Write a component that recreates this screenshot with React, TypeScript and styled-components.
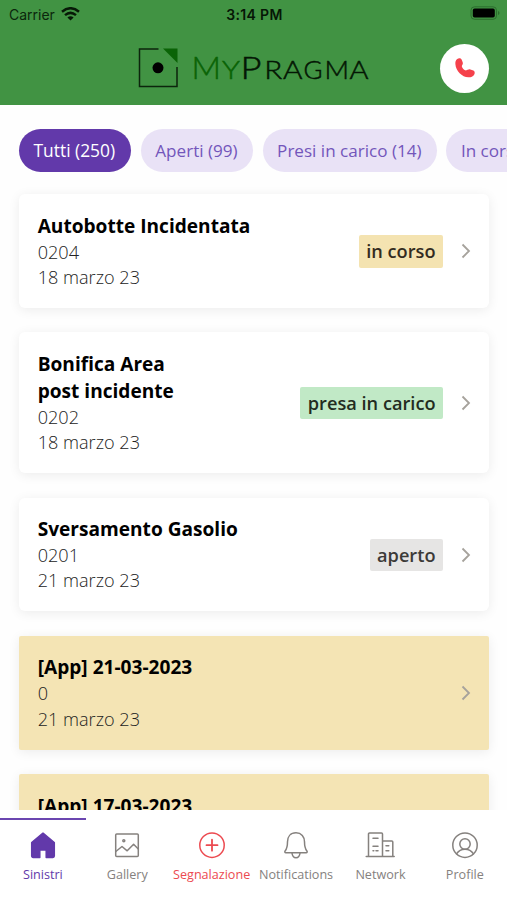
import React from "react";
import styled, { createGlobalStyle } from "styled-components";

const GlobalStyle = createGlobalStyle`
  *, *::before, *::after { box-sizing: border-box; }
  body { margin: 0; background: #fefefe; font-family: "Open Sans", sans-serif; }
`;

const Screen = styled.div`
  width: 507px;
  height: 900px;
  display: flex;
  flex-direction: column;
  overflow: hidden;
  background: #fefefe;
`;

const Header = styled.header`
  flex: 0 0 104.5px;
  background: #419343;
`;

const StatusBar = styled.div`
  height: 28px;
  display: grid;
  grid-template-columns: 1fr 1fr 1fr;
  align-items: center;
  padding: 0 7px 0 9px;
  font-family: Inter, sans-serif;
  color: #0b260c;
`;

const Carrier = styled.span`
  display: flex;
  align-items: center;
  gap: 6px;
  font-size: 14px;
`;

const Clock = styled.span`
  text-align: center;
  font-weight: 600;
  font-size: 14px;
  color: #061606;
  letter-spacing: 0.35px;
`;

const Battery = styled.svg`
  justify-self: end;
  display: block;
  position: relative;
  top: -1px;
`;

const TitleBar = styled.div`
  display: flex;
  align-items: center;
  justify-content: space-between;
  height: 76px;
  padding: 4px 18px 0 138px;
`;

const Call = styled.button`
  display: flex;
  align-items: center;
  justify-content: center;
  width: 49px;
  height: 49px;
  padding: 0;
  border: 0;
  border-radius: 50%;
  background: #fff;
`;

const Filters = styled.nav`
  flex: 0 0 67.5px;
  display: flex;
  gap: 9.8px;
  padding: 24.5px 0 0 19px;
`;

const Chip = styled.button<{ $active?: boolean; $width: number }>`
  flex: 0 0 ${(p) => p.$width}px;
  height: 43px;
  padding: 0 0 1px 14.5px;
  border: 0;
  border-radius: 22px;
  text-align: left;
  white-space: nowrap;
  font-family: inherit;
  font-size: ${(p) => (p.$active ? 17.4 : 17.1)}px;
  color: ${(p) => (p.$active ? "#fff" : "#7356bb")};
  background: ${(p) => (p.$active ? "#6239aa" : "#e9e2f6")};
`;

const List = styled.main`
  flex: 1;
  min-height: 0;
  overflow: hidden;
  display: flex;
  flex-direction: column;
  gap: 24.4px;
  padding: 22px 18px 0 19px;
`;

const Card = styled.article<{ $tinted?: boolean }>`
  flex: none;
  display: flex;
  align-items: center;
  padding: 18.6px 17.2px 17.7px 18.7px;
  border-radius: ${(p) => (p.$tinted ? 2 : 6)}px;
  background: ${(p) => (p.$tinted ? "#f4e4b4" : "#fff")};
  box-shadow: 0 2px 12px rgba(0, 0, 0, 0.075);
`;

const Info = styled.div`
  flex: 1;
`;

const Title = styled.h2`
  margin: 0;
  font-size: 19.1px;
  line-height: 27px;
  font-weight: 700;
  white-space: pre-line;
  color: #000;
`;

const Detail = styled.p`
  margin: 0;
  font-size: 18.1px;
  line-height: 25.3px;
  font-weight: 300;
  color: #222;
`;

const Badge = styled.span<{ $color: string; $ink: string }>`
  height: 32.5px;
  padding: 0 7.5px;
  margin-right: 16.8px;
  border-radius: 2px;
  font-size: 18.2px;
  line-height: 32px;
  font-weight: 600;
  color: ${(p) => p.$ink};
  background: ${(p) => p.$color};
`;

const TabBar = styled.nav`
  flex: 0 0 90px;
  display: grid;
  grid-template-columns: repeat(6, 84.4px);
  padding-top: 8px;
  background: #fff;
`;

const Tab = styled.a<{ $color: string; $active?: boolean }>`
  display: flex;
  flex-direction: column;
  align-items: center;
  height: 70px;
  padding-top: 12px;
  border-top: 2.4px solid ${(p) => (p.$active ? "#6b46b0" : "transparent")};
  color: ${(p) => p.$color};
  margin-right: -1.4px;
`;

const TabLabel = styled.span`
  margin-top: 7px;
  font-size: 12.6px;
  line-height: 17px;
  white-space: nowrap;
`;

const Icon = styled.svg`
  display: block;
  overflow: visible;
  fill: none;
  stroke: currentColor;
  stroke-width: 1.5;
  stroke-linecap: round;
  stroke-linejoin: round;
`;

const Chevron = () => (
  <svg width="12" height="18" viewBox="0 0 12 18" fill="none" stroke="#a6a29c" strokeWidth="1.8">
    <path d="M2.500 2.500 9 9 2.500 15.500" />
  </svg>
);

const letters = [
  { char: "M", x: 53.5, width: 29.5, big: true, fill: "#0a6306" },
  { char: "Y", x: 84, width: 18, fill: "#0a6306" },
  { char: "P", x: 102.6, width: 21, big: true, fill: "#041604" },
  { char: "R", x: 126.2, width: 18, fill: "#041604" },
  { char: "A", x: 145, width: 19.5, fill: "#041604" },
  { char: "G", x: 165.6, width: 19, fill: "#041604" },
  { char: "M", x: 186.5, width: 24.5, fill: "#041604" },
  { char: "A", x: 211.5, width: 19, fill: "#041604" },
];

const Logo = () => (
  <svg width="234" height="42" viewBox="0 0 234 42">
    <path d="M20.5 2H1.5V39.5H39V20" fill="none" stroke="#0c250c" strokeWidth="1.5" />
    <path d="M25 1.5H39.5V16Z" fill="#0a6306" />
    <circle cx="20" cy="20.8" r="5.5" fill="#000" />
    <g fontFamily="Lato, sans-serif" fontWeight="300" strokeWidth="0.5">
      {letters.map((l) => (
        <text key={l.x} x={l.x} y="32" fontSize={l.big ? 30.5 : 25.5} fill={l.fill} stroke={l.fill} textLength={l.width} lengthAdjust="spacingAndGlyphs">
          {l.char}
        </text>
      ))}
    </g>
  </svg>
);

const Wifi = () => (
  <svg width="19" height="14" viewBox="0 0 19 14" fill="none" stroke="#071907" strokeWidth="2.5">
    <path d="M1 4.7Q9.5-2.2 18 4.7M4 8.1Q9.5 3.6 15 8.1" />
    <path d="m6.4 10.4 3.1 3.1 3.1-3.1Q9.5 8 6.4 10.4Z" fill="#071907" stroke="none" />
  </svg>
);

const icons: Record<string, React.ReactNode> = {
  Sinistri: (
    <path fill="currentColor" d="M13 1.2 1.7 10.6V24a1.4 1.4 0 0 0 1.4 1.4H9.8V18h6.4v7.4h6.7a1.4 1.4 0 0 0 1.4-1.4V10.6Z" />
  ),
  Gallery: (
    <>
      <rect x="1.7" y="2" width="22.6" height="22.6" rx="1" />
      <path d="m1.8 19.5 6.2-5 5.2 4.3 6.4-6.5 4.7 4.7" />
      <circle cx="9.8" cy="8.8" r="1" />
    </>
  ),
  Segnalazione: (
    <>
      <circle cx="13" cy="13.2" r="12.2" />
      <path d="M13 7.7v11M7.5 13.2h11" strokeWidth="1.8" />
    </>
  ),
  Notifications: (
    <>
      <path d="M13 .8C7.5.8 4.5 4.7 4.5 9.8c0 5.2-.7 7.1-2.4 9.2-.6.8-.2 1.8.7 1.8h20.4c.9 0 1.3-1 .7-1.8-1.7-2.1-2.4-4-2.4-9.2C21.500 4.700 18.500.8 13 .8Z" />
      <path d="M9 21c.3 3 1.8 4.800 4 4.800s3.700-1.800 4-4.800" />
    </>
  ),
  Network: (
    <>
      <path d="M1.500 24.600V2a1 1 0 0 1 1-1H14.500a1 1 0 0 1 1 1v22.600M15.500 9h9.300a1 1 0 0 1 1 1v14.600M-.8 24.600h28" />
      <path d="M6 6.300h5M6 14.200h5M9 18.800h2M6 18.800h.8M19 13.800h2.800M19 18.800h2.800" />
    </>
  ),
  Profile: (
    <>
      <circle cx="13" cy="13.200" r="12.200" />
      <circle cx="13" cy="12" r="5.200" />
      <path d="M4.500 21.800c2-3 5-4.600 8.500-4.600s6.500 1.600 8.500 4.600" />
    </>
  ),
};

const chips = [
  { label: "Tutti (250)", width: 112, active: true },
  { label: "Aperti (99)", width: 112 },
  { label: "Presi in carico (14)", width: 174 },
  { label: "In corso (3)", width: 116 },
];

const claims = [
  { title: "Autobotte Incidentata", code: "0204", date: "18 marzo 23", badge: "in corso", color: "#f4e3b1", ink: "#332b20" },
  { title: "Bonifica Area\npost incidente", code: "0202", date: "18 marzo 23", badge: "presa in carico", color: "#c1e9c6", ink: "#232c20" },
  { title: "Sversamento Gasolio", code: "0201", date: "21 marzo 23", badge: "aperto", color: "#e6e5e4", ink: "#3c3a38" },
  { title: "[App] 21-03-2023", code: "0", date: "21 marzo 23" },
  { title: "[App] 17-03-2023", code: "0", date: "17 marzo 23" },
];

const tabColor = (name: string) =>
  name === "Sinistri" ? "#6239aa" : name === "Segnalazione" ? "#ec4a50" : "#85817e";

export default function App() {
  return (
    <>
      <GlobalStyle />
      <Screen>
        <Header>
          <StatusBar>
            <Carrier>Carrier <Wifi /></Carrier>
            <Clock>3:14 PM</Clock>
            <Battery width="30" height="14" viewBox="0 0 30 14">
              <rect x="1" y=".8" width="25.500" height="12.500" rx="3.500" fill="none" stroke="#2c6e2e" />
              <rect x="2.800" y="2.600" width="22" height="9" rx="1.800" fill="#000" />
              <path d="M28 5v4q1.500-.5 1.500-2T28 5Z" fill="#2c6e2e" />
            </Battery>
          </StatusBar>
          <TitleBar>
            <Logo />
            <Call aria-label="Chiama">
              <svg width="22" height="22" viewBox="0 0 22 22" fill="#f5414b">
                <path d="M3.200 1.900C4.700.9 6.600.8 7.600 2.400L8.700 5.300C9.400 7 8 8.100 7.800 9.200 8.300 11.300 10 13 12 13.400 13.300 13.200 14.700 11.900 16.300 12.400L19.400 13.400C21 14.200 21.100 16.500 20 18 18.700 19.800 16.600 20.500 14.300 20.300 8 20 1.800 14 1.400 7.200 1.200 4.900 1.600 3 3.200 1.900Z" />
              </svg>
            </Call>
          </TitleBar>
        </Header>
        <Filters>
          {chips.map((c) => (
            <Chip key={c.label} $active={c.active} $width={c.width}>{c.label}</Chip>
          ))}
        </Filters>
        <List>
          {claims.map((c) => (
            <Card key={c.title} $tinted={!c.badge}>
              <Info>
                <Title>{c.title}</Title>
                <Detail>{c.code}</Detail>
                <Detail>{c.date}</Detail>
              </Info>
              {c.badge && <Badge $color={c.color!} $ink={c.ink!}>{c.badge}</Badge>}
              <Chevron />
            </Card>
          ))}
        </List>
        <TabBar>
          {Object.keys(icons).map((name) => (
            <Tab key={name} $color={tabColor(name)} $active={name === "Sinistri"}>
              <Icon width="26" height="27" viewBox="0 0 26 27">{icons[name]}</Icon>
              <TabLabel>{name}</TabLabel>
            </Tab>
          ))}
        </TabBar>
      </Screen>
    </>
  );
}
